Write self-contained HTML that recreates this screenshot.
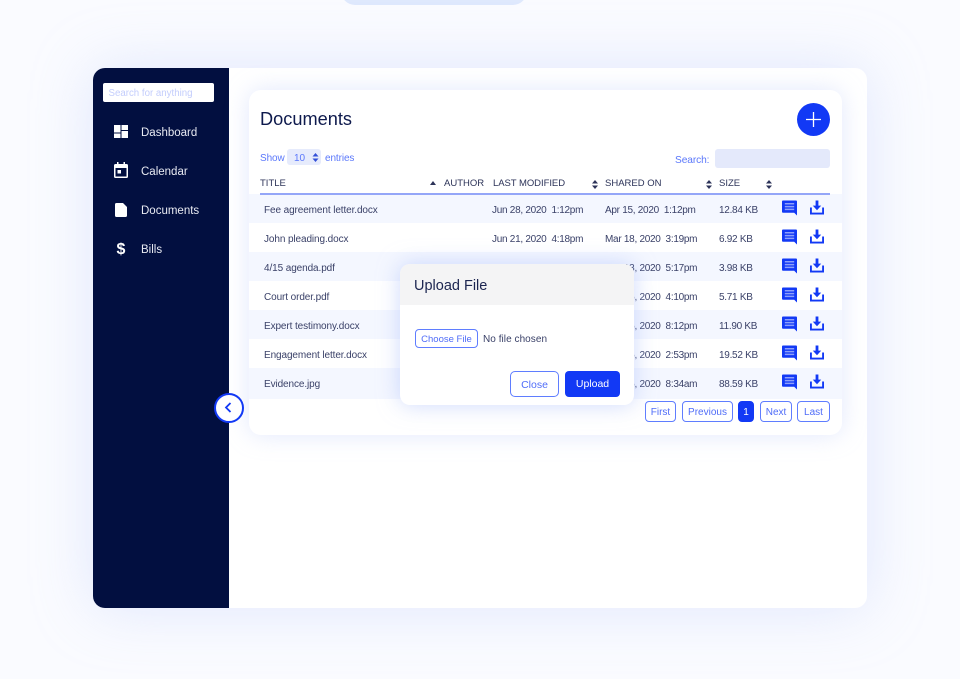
<!DOCTYPE html>
<html><head><meta charset="utf-8">
<style>
html,body{margin:0;padding:0}
body{width:960px;height:679px;overflow:hidden;background:#fafbff;position:relative;font-family:"Liberation Sans",sans-serif;color:#3a4168}
.a{position:absolute}
.t{position:absolute;white-space:nowrap;font-size:10px;line-height:14px;letter-spacing:-.1px}
.d{letter-spacing:-.28px}
.h{position:absolute;white-space:nowrap;font-size:9.5px;line-height:14px;color:#2c3358}
.n{position:absolute;white-space:nowrap;font-size:11.5px;line-height:14px;left:141px;color:#e8eaf2}
.row{position:absolute;left:249px;width:593px;height:29px}
.b{position:absolute;box-sizing:border-box;border:1px solid #5f7dff;border-radius:4px;background:#fff;color:#4f6cf8;font-size:10px;line-height:21px;text-align:center;height:21px;top:401px}
svg{position:absolute;display:block}
</style></head><body>
<div class="a" style="left:341px;top:-20px;width:186px;height:25px;background:#dfe9fd;border-radius:0 0 14px 14px"></div>
<div class="a" style="left:93px;top:68px;width:774px;height:540px;background:#fff;border-radius:12px;box-shadow:0 0 60px rgba(185,200,250,.38)"></div>
<div class="a" style="left:93px;top:68px;width:136px;height:540px;background:#020f40;border-radius:12px 0 0 12px"></div>
<div class="a" style="left:103px;top:83px;width:111px;height:19px;background:#fff;border-radius:2px;font-size:9.7px;line-height:22px;color:#c3cdfc;text-indent:5.500px;white-space:nowrap;overflow:hidden">Search for anything</div>

<svg style="left:114px;top:125px" width="14" height="13" viewBox="0 0 14 13" fill="#fff"><path d="M0 0h6.500v7.500H0zM7.500 0H14v5H7.500zM7.500 6H14v7H7.500zM0 8.500h6.500V13H0z"/></svg>
<svg style="left:114px;top:162px" width="14" height="16" viewBox="0 0 14 16"><path d="M3 0h1.500v2h5V0H11v2h1.500A1.500 1.500 0 0 1 14 3.500v11a1.500 1.500 0 0 1-1.500 1.500h-11A1.500 1.500 0 0 1 0 14.500v-11A1.500 1.500 0 0 1 1.500 2H3zM1.500 6v8.500h11V6z" fill="#fff"/><rect x="3.500" y="8" width="3.500" height="3.500" fill="#fff"/></svg>
<svg style="left:115px;top:203px" width="12" height="14" viewBox="0 0 12 14"><path d="M1.500 0H8l4 4v8.500a1.500 1.500 0 0 1-1.500 1.500h-9A1.500 1.500 0 0 1 0 12.500v-11A1.500 1.500 0 0 1 1.500 0z" fill="#fff"/></svg>
<div class="a" style="left:114px;top:241px;width:14px;text-align:center;font-size:16px;line-height:18px;font-weight:bold;color:#fff">$</div>
<div class="n" style="top:126px">Dashboard</div>
<div class="n" style="top:165px">Calendar</div>
<div class="n" style="top:204px">Documents</div>
<div class="n" style="top:243px">Bills</div>

<div class="a" style="left:249px;top:90px;width:593px;height:345px;background:#fff;border-radius:12px;box-shadow:0 0 24px rgba(175,190,250,.36)"></div>
<div class="a" style="left:260px;top:108px;font-size:18.200px;line-height:23px;color:#0e1a4d;white-space:nowrap">Documents</div>
<div class="a" style="left:797px;top:103px;width:33px;height:33px;border-radius:50%;background:#1239f5"></div>
<svg style="left:805px;top:111px" width="17" height="17" viewBox="0 0 17 17"><path d="M8.500 1v15M1 8.500h15" stroke="#fff" stroke-width="1.300" fill="none"/></svg>

<div class="t" style="left:260px;top:152px;color:#5b78fb">Show</div>
<div class="a" style="left:287px;top:149px;width:34px;height:16px;background:#e6ebfc;border-radius:3px"></div>
<div class="t" style="left:294px;top:152px;color:#5b78fb">10</div>
<svg style="left:312px;top:153px" width="7" height="9" viewBox="0 0 7 9" fill="#3350d8"><path d="M3.500 0L6.500 3.500H.5zM3.500 9L.5 5.500h6z"/></svg>
<div class="t" style="left:325px;top:152px;color:#5b78fb">entries</div>
<div class="t" style="left:675px;top:154px;color:#5b78fb;font-size:10.200px">Search:</div>
<div class="a" style="left:715px;top:149px;width:115px;height:19px;background:#e4e9fb;border-radius:3px"></div>

<div class="h" style="left:260px;top:177px">TITLE</div>
<svg style="left:430px;top:181px" width="6" height="4" viewBox="0 0 6 4" fill="#2c3358"><path d="M3 0l3 4H0z"/></svg>
<div class="h" style="left:444px;top:177px">AUTHOR</div>
<div class="h" style="left:493px;top:177px;letter-spacing:-.05px">LAST MODIFIED</div>
<svg style="left:592px;top:180px" width="6" height="9" viewBox="0 0 6 9" fill="#2c3358"><path d="M3 0l3 3.500H0zM3 9L0 5.500h6z"/></svg>
<div class="h" style="left:605px;top:177px">SHARED ON</div>
<svg style="left:706px;top:180px" width="6" height="9" viewBox="0 0 6 9" fill="#2c3358"><path d="M3 0l3 3.500H0zM3 9L0 5.500h6z"/></svg>
<div class="h" style="left:719px;top:177px">SIZE</div>
<svg style="left:766px;top:180px" width="6" height="9" viewBox="0 0 6 9" fill="#2c3358"><path d="M3 0l3 3.500H0zM3 9L0 5.500h6z"/></svg>

<div class="row" style="top:194px;background:#f4f7ff"></div>
<div class="row" style="top:252px;background:#f4f7ff"></div>
<div class="row" style="top:310px;background:#f4f7ff"></div>
<div class="row" style="top:368px;height:31px;background:#f4f7ff"></div>
<div class="a" style="left:260px;top:193px;width:570px;height:2px;background:#94a6f8"></div>

<div class="t" style="left:264px;top:204px">Fee agreement letter.docx</div>
<div class="t" style="left:264px;top:233px">John pleading.docx</div>
<div class="t" style="left:264px;top:262px">4/15 agenda.pdf</div>
<div class="t" style="left:264px;top:291px">Court order.pdf</div>
<div class="t" style="left:264px;top:320px">Expert testimony.docx</div>
<div class="t" style="left:264px;top:349px">Engagement letter.docx</div>
<div class="t" style="left:264px;top:378px">Evidence.jpg</div>

<div class="t d" style="left:492px;top:204px">Jun 28, 2020&nbsp; 1:12pm</div>
<div class="t d" style="left:492px;top:233px">Jun 21, 2020&nbsp; 4:18pm</div>
<div class="t d" style="left:605px;top:204px">Apr 15, 2020&nbsp; 1:12pm</div>
<div class="t d" style="left:605px;top:233px">Mar 18, 2020&nbsp; 3:19pm</div>
<div class="t d" style="left:605px;top:262px">Mar 13, 2020&nbsp; 5:17pm</div>
<div class="t d" style="left:605px;top:291px">Mar 16, 2020&nbsp; 4:10pm</div>
<div class="t d" style="left:605px;top:320px">Mar 15, 2020&nbsp; 8:12pm</div>
<div class="t d" style="left:605px;top:349px">Mar 15, 2020&nbsp; 2:53pm</div>
<div class="t d" style="left:605px;top:378px">Mar 15, 2020&nbsp; 8:34am</div>
<div class="t d" style="left:719px;top:204px">12.84 KB</div>
<div class="t d" style="left:719px;top:233px">6.92 KB</div>
<div class="t d" style="left:719px;top:262px">3.98 KB</div>
<div class="t d" style="left:719px;top:291px">5.71 KB</div>
<div class="t d" style="left:719px;top:320px">11.90 KB</div>
<div class="t d" style="left:719px;top:349px">19.52 KB</div>
<div class="t d" style="left:719px;top:378px">88.59 KB</div>

<svg width="0" height="0" style="left:0;top:0"><defs>
<symbol id="c" viewBox="0 0 16 16"><path d="M1 0h14a1 1 0 0 1 1 1V16l-3-3H1a1 1 0 0 1-1-1V1a1 1 0 0 1 1-1z" fill="#1239f5"/><path d="M3 3.500h10M3 6.500h10M3 9.500h10" stroke="#8ea0fb" stroke-width="1.600"/></symbol>
<symbol id="d" viewBox="0 0 15 15"><path d="M6 0h3v5.500h3L7.500 10.500 3 5.500h3z" fill="#1239f5"/><path d="M1 7.500V14h13V7.500" fill="none" stroke="#1239f5" stroke-width="2"/></symbol>
</defs></svg>
<svg style="left:782px;top:200px" width="15" height="16"><use href="#c"/></svg><svg style="left:810px;top:200px" width="14" height="15"><use href="#d"/></svg>
<svg style="left:782px;top:229px" width="15" height="16"><use href="#c"/></svg><svg style="left:810px;top:229px" width="14" height="15"><use href="#d"/></svg>
<svg style="left:782px;top:258px" width="15" height="16"><use href="#c"/></svg><svg style="left:810px;top:258px" width="14" height="15"><use href="#d"/></svg>
<svg style="left:782px;top:287px" width="15" height="16"><use href="#c"/></svg><svg style="left:810px;top:287px" width="14" height="15"><use href="#d"/></svg>
<svg style="left:782px;top:316px" width="15" height="16"><use href="#c"/></svg><svg style="left:810px;top:316px" width="14" height="15"><use href="#d"/></svg>
<svg style="left:782px;top:345px" width="15" height="16"><use href="#c"/></svg><svg style="left:810px;top:345px" width="14" height="15"><use href="#d"/></svg>
<svg style="left:782px;top:374px" width="15" height="16"><use href="#c"/></svg><svg style="left:810px;top:374px" width="14" height="15"><use href="#d"/></svg>

<div class="b" style="left:645px;width:31px">First</div>
<div class="b" style="left:682px;width:51px">Previous</div>
<div class="b" style="left:738px;width:16px;background:#1239f5;border-color:#1239f5;color:#fff">1</div>
<div class="b" style="left:760px;width:32px">Next</div>
<div class="b" style="left:797px;width:33px">Last</div>

<div class="a" style="left:400px;top:264px;width:234px;height:141px;background:#fff;border-radius:10px;box-shadow:0 0 22px rgba(165,185,250,.55)"></div>
<div class="a" style="left:400px;top:264px;width:234px;height:41px;background:#f4f4f5;border-radius:10px 10px 0 0"></div>
<div class="a" style="left:414px;top:277px;font-size:14.500px;line-height:18px;color:#1c2550;white-space:nowrap">Upload File</div>
<div class="a" style="left:415px;top:329px;width:63px;height:19px;box-sizing:border-box;border:1px solid #5f7dff;border-radius:4px;font-size:9.500px;line-height:19px;text-align:center;color:#4f6cf8;white-space:nowrap">Choose File</div>
<div class="t" style="left:483px;top:333px;letter-spacing:.05px">No file chosen</div>
<div class="a" style="left:510px;top:371px;width:49px;height:26px;box-sizing:border-box;border:1px solid #5f7dff;border-radius:5px;background:#fff;font-size:10.500px;line-height:26px;text-align:center;color:#4f6cf8">Close</div>
<div class="a" style="left:565px;top:371px;width:55px;height:26px;border-radius:4px;background:#1239f5;font-size:10.500px;line-height:27px;text-align:center;color:#fff">Upload</div>

<div class="a" style="left:213.500px;top:392.500px;width:30px;height:30px;box-sizing:border-box;border:2px solid #1239f5;border-radius:50%;background:#fff"></div>
<svg style="left:224px;top:402px" width="8" height="11" viewBox="0 0 8 11"><path d="M6.500 1L2 5.500 6.500 10" stroke="#1239f5" stroke-width="1.800" fill="none"/></svg>
</body></html>
